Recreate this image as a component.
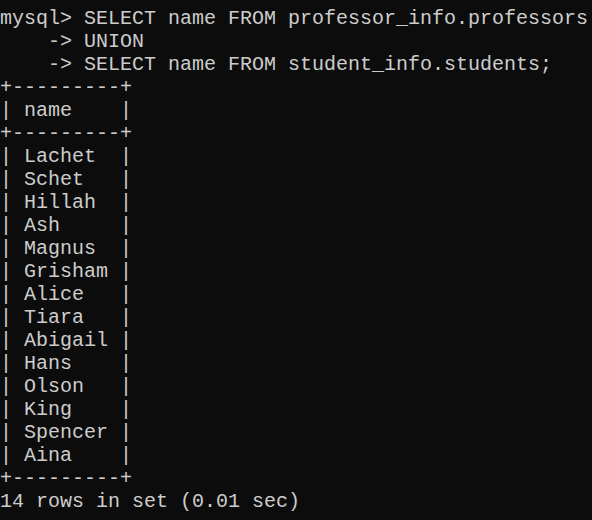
const lines = [
  "mysql> SELECT name FROM professor_info.professors",
  "    -> UNION",
  "    -> SELECT name FROM student_info.students;",
  "+---------+",
  "| name    |",
  "+---------+",
  "| Lachet  |",
  "| Schet   |",
  "| Hillah  |",
  "| Ash     |",
  "| Magnus  |",
  "| Grisham |",
  "| Alice   |",
  "| Tiara   |",
  "| Abigail |",
  "| Hans    |",
  "| Olson   |",
  "| King    |",
  "| Spencer |",
  "| Aina    |",
  "+---------+",
  "14 rows in set (0.01 sec)",
];

export default function App() {
  return (
    <div className="w-[592px] h-[520px] overflow-hidden bg-[#0c0c0c] text-[#cccccc] pt-[7px] font-['Liberation_Mono',monospace] text-[20px]">
      {lines.map((l, i) => (
        <div key={i} className="h-[23px] leading-[23px] whitespace-pre">
          {l}
        </div>
      ))}
    </div>
  );
}
